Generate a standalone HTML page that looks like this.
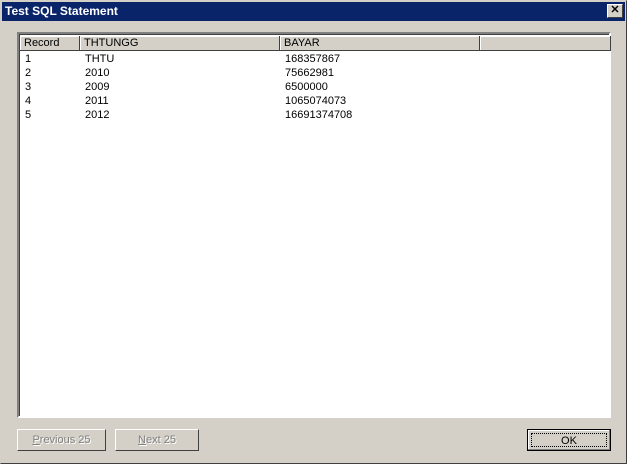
<html><head><style>
body{margin:0;width:627px;height:464px;background:#d4d0c8;position:relative;overflow:hidden;font-family:"Liberation Sans",sans-serif;font-size:11px;}
.f{position:absolute;left:0;top:0;width:625px;height:462px;border:1px solid;border-color:#d4d0c8 #404040 #404040 #d4d0c8;}
.t{position:absolute;left:2px;top:2px;width:623px;height:19px;background:#0a246a;color:#fff;font-weight:bold;font-size:12px;line-height:19px;}
.t span{margin-left:3px;}
.x{position:absolute;left:607px;top:4px;width:14px;height:12px;background:#d4d0c8;border:1px solid;border-color:#fff #404040 #404040 #fff;font-size:11px;line-height:11px;text-align:center;color:#000;font-weight:bold}
.lb{position:absolute;left:17px;top:32px;width:590px;height:382px;background:#fff;border:2px solid;border-color:#808080 #fff #fff #808080;box-shadow:inset 1px 1px 0 #404040;}
.h{position:absolute;top:2px;height:15px;background:#d4d0c8;border-right:1px solid #404040;border-bottom:1px solid #404040;box-shadow:inset 1px 1px 0 #fff;line-height:15px;padding-left:4px;box-sizing:border-box;color:#000}
.r{position:absolute;line-height:14px;color:#000}
.b{position:absolute;top:429px;height:22px;box-sizing:border-box;border:1px solid;border-color:#fff #404040 #404040 #fff;text-align:center;line-height:20px;color:#808080;text-shadow:1px 1px 0 #fff}
</style></head><body>
<div class="f"></div>
<div class="t"><span>Test SQL Statement</span></div>
<div class="x">✕</div>
<div class="lb">
<div class="h" style="left:1px;width:60px">Record</div>
<div class="h" style="left:61px;width:200px">THTUNGG</div>
<div class="h" style="left:261px;width:200px">BAYAR</div>
<div class="h" style="left:461px;width:131px"></div>
<div class="r" style="left:6px;top:18px">1<br>2<br>3<br>4<br>5</div>
<div class="r" style="left:66px;top:18px">THTU<br>2010<br>2009<br>2011<br>2012</div>
<div class="r" style="left:266px;top:18px">168357867<br>75662981<br>6500000<br>1065074073<br>16691374708</div>
</div>
<div class="b" style="left:17px;width:89px"><u>P</u>revious 25</div>
<div class="b" style="left:115px;width:84px"><u>N</u>ext 25</div>
<div class="b" style="left:527px;width:84px;color:#000;text-shadow:none;border:1px solid #000;box-shadow:inset -1px -1px 0 #808080,inset 1px 1px 0 #fff"><div style="position:absolute;left:3px;top:3px;right:3px;bottom:3px;border:1px dotted #000;line-height:14px">OK</div></div>
</body></html>
